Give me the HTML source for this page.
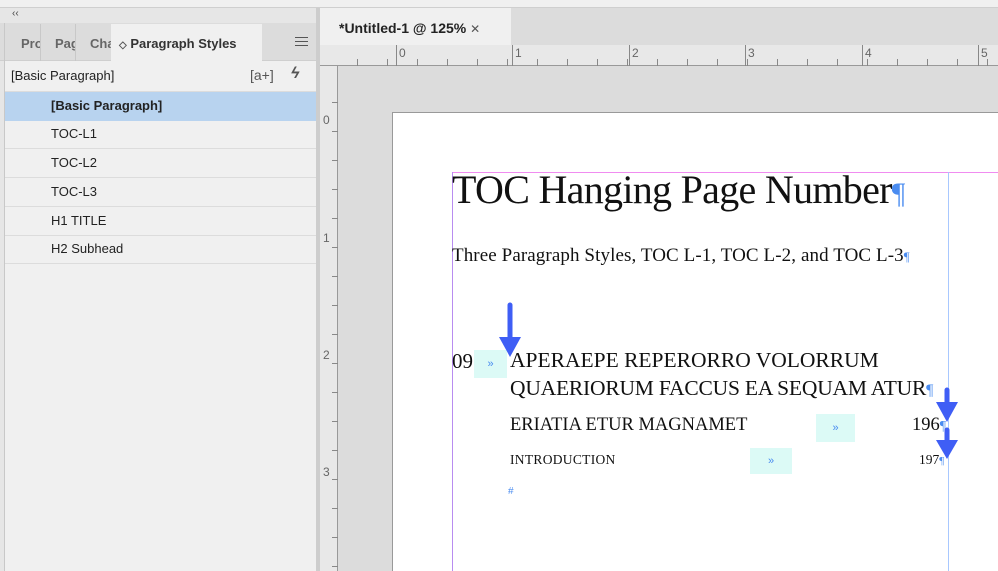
<!DOCTYPE html>
<html><head><meta charset="utf-8"><style>
*{margin:0;padding:0;box-sizing:border-box}
body{width:998px;height:571px;overflow:hidden;background:#f0f0f0;font-family:"Liberation Sans",sans-serif;position:relative}
.a{position:absolute}
.serif{font-family:"Liberation Serif",serif;color:#111;white-space:nowrap}
.row{position:absolute;left:5px;width:311px;height:29px;border-bottom:1px solid #dcdcdc;font-size:13px;color:#222;padding-left:46px;line-height:28px}
.pil{color:#4a8cf0}
.tb{background:#dcfaf6;position:absolute;color:#4a8cf0;font-size:11px;text-align:center}
</style></head><body>
<div class="a" style="left:0;top:0;width:998px;height:8px;background:#f0f0f0"></div>
<div class="a" style="left:0;top:7px;width:998px;height:1px;background:#cfcfcf"></div>
<div class="a" style="left:0;top:8px;width:316px;height:563px;background:#e6e6e6"></div>
<div class="a" style="left:12px;top:8px;font-size:10px;color:#444">‹‹</div>
<div class="a" style="left:0;top:23px;width:316px;height:38px;background:#dcdcdc;border-bottom:1px solid #cfcfcf"></div>
<div class="a" style="left:5px;top:61px;width:311px;height:510px;background:#f0f0f0"></div>
<div class="a" style="left:4px;top:23px;width:1px;height:548px;background:#c8c8c8"></div>
<div class="a" style="left:5px;top:24px;width:36px;height:37px;border-right:1px solid #c8c8c8;font-size:13px;font-weight:bold;color:#666;padding:12px 0 0 16px;overflow:hidden">Pro</div>
<div class="a" style="left:41px;top:24px;width:35px;height:37px;border-right:1px solid #c8c8c8;font-size:13px;font-weight:bold;color:#666;padding:12px 0 0 14px;overflow:hidden">Pag</div>
<div class="a" style="left:76px;top:24px;width:35px;height:37px;font-size:13px;font-weight:bold;color:#666;padding:12px 0 0 14px;overflow:hidden">Cha</div>
<div class="a" style="left:111px;top:24px;width:151px;height:38px;background:#f0f0f0;font-size:13px;font-weight:bold;color:#333;padding:12px 0 0 8px;white-space:nowrap"><span style="font-size:10px;color:#555">◇</span> Paragraph Styles</div>
<div class="a" style="left:295px;top:37px;width:13px;height:9px;border-top:1px solid #555;border-bottom:1px solid #555"></div>
<div class="a" style="left:295px;top:41px;width:13px;height:1px;background:#555"></div>
<div class="a" style="left:11px;top:68px;font-size:13px;color:#222">[Basic Paragraph]</div>
<div class="a" style="left:250px;top:67px;font-size:14px;color:#555">[a+]</div>
<div class="a" style="left:291px;top:65px;font-size:16px;color:#555;font-style:italic;font-weight:bold">ϟ</div>
<div class="a" style="left:5px;top:91px;width:311px;height:1px;background:#dcdcdc"></div>
<div class="row" style="top:92px;background:#b8d3ef;font-weight:bold;border-bottom:none">[Basic Paragraph]</div>
<div class="row" style="top:120px">TOC-L1</div>
<div class="row" style="top:149px">TOC-L2</div>
<div class="row" style="top:178px">TOC-L3</div>
<div class="row" style="top:207px">H1 TITLE</div>
<div class="row" style="top:235px">H2 Subhead</div>
<div class="a" style="left:316px;top:8px;width:4px;height:563px;background:#cdcdcd"></div>
<div class="a" style="left:320px;top:8px;width:678px;height:563px;background:#dcdcdc"></div>
<div class="a" style="left:320px;top:8px;width:191px;height:37px;background:#f0f0f0;font-size:14px;font-weight:bold;color:#222;padding:12px 0 0 19px;white-space:nowrap">*Untitled-1 @ 125% <span style="font-size:12px;font-weight:normal;color:#555">✕</span></div>
<div class="a" style="left:320px;top:45px;width:678px;height:21px;background:#e8e8e8;border-bottom:1px solid #999"></div>
<div class="a" style="left:320px;top:66px;width:18px;height:505px;background:#e8e8e8;border-right:1px solid #999"></div>
<div class="a" style="left:338px;top:59px;width:660px;height:7px;background:repeating-linear-gradient(90deg,transparent 0,transparent 29px,#888 29px,#888 30px);background-position:-10px 0"></div>
<div class="a" style="left:320px;top:74px;width:18px;height:497px;background:repeating-linear-gradient(180deg,transparent 0,transparent 28px,#888 28px,#888 29px);clip-path:inset(0 0 0 12px)"></div>
<div class="a" style="left:396px;top:45px;width:1px;height:21px;background:#888"></div>
<div class="a" style="left:512px;top:45px;width:1px;height:21px;background:#888"></div>
<div class="a" style="left:629px;top:45px;width:1px;height:21px;background:#888"></div>
<div class="a" style="left:745px;top:45px;width:1px;height:21px;background:#888"></div>
<div class="a" style="left:862px;top:45px;width:1px;height:21px;background:#888"></div>
<div class="a" style="left:978px;top:45px;width:1px;height:21px;background:#888"></div>
<div class="a" style="font-size:12px;color:#666;top:46px;left:399px">0</div>
<div class="a" style="font-size:12px;color:#666;top:46px;left:515px">1</div>
<div class="a" style="font-size:12px;color:#666;top:46px;left:632px">2</div>
<div class="a" style="font-size:12px;color:#666;top:46px;left:748px">3</div>
<div class="a" style="font-size:12px;color:#666;top:46px;left:865px">4</div>
<div class="a" style="font-size:12px;color:#666;top:46px;left:981px">5</div>
<div class="a" style="font-size:12px;color:#666;left:323px;top:113px">0</div>
<div class="a" style="font-size:12px;color:#666;left:323px;top:231px">1</div>
<div class="a" style="font-size:12px;color:#666;left:323px;top:348px">2</div>
<div class="a" style="font-size:12px;color:#666;left:323px;top:465px">3</div>
<div class="a" style="left:392px;top:112px;width:606px;height:459px;background:#fff;border-left:1px solid #999;border-top:1px solid #999"></div>
<div class="a" style="left:452px;top:172px;width:546px;height:1px;background:#f08cf0"></div>
<div class="a" style="left:452px;top:172px;width:1px;height:399px;background:#b88cf0"></div>
<div class="a" style="left:948px;top:172px;width:1px;height:399px;background:#a8c8ff"></div>
<div class="a serif" style="left:452px;top:166px;font-size:40px;letter-spacing:-0.7px">TOC Hanging Page Number<span class="pil" style="font-size:30px">¶</span></div>
<div class="a serif" style="left:452px;top:245px;font-size:19px;letter-spacing:0.1px">Three Paragraph Styles, TOC L-1, TOC L-2, and TOC L-3<span class="pil" style="font-size:13px">¶</span></div>
<div class="tb" style="left:474px;top:350px;width:33px;height:28px;line-height:28px">»</div>
<div class="a serif" style="left:452px;top:349px;font-size:21px">09</div>
<div class="a serif" style="left:510px;top:348px;font-size:21.5px;letter-spacing:0">APERAEPE REPERORRO VOLORRUM</div>
<div class="a serif" style="left:510px;top:376px;font-size:21.5px;letter-spacing:-0.2px">QUAERIORUM FACCUS EA SEQUAM ATUR<span class="pil" style="font-size:16px">¶</span></div>
<div class="tb" style="left:816px;top:414px;width:39px;height:28px;line-height:28px">»</div>
<div class="a serif" style="left:510px;top:415px;font-size:18.5px;letter-spacing:0">ERIATIA ETUR MAGNAMET</div>
<div class="a serif" style="left:912px;top:415px;font-size:18.5px">196<span class="pil" style="font-size:14px">¶</span></div>
<div class="tb" style="left:750px;top:448px;width:42px;height:26px;line-height:26px">»</div>
<div class="a serif" style="left:510px;top:452px;font-size:13.5px;letter-spacing:0.3px">INTRODUCTION</div>
<div class="a serif" style="left:919px;top:452px;font-size:13.5px">197<span class="pil" style="font-size:11px">¶</span></div>
<div class="a" style="left:508px;top:486px;font-size:10px;color:#4a8cf0">#</div>
<svg class="a" style="left:0;top:0" width="998" height="571">
<g stroke="#3f5ef5" stroke-width="5" stroke-linecap="round" fill="#3f5ef5">
<line x1="510" y1="305" x2="510" y2="340"/>
<polygon stroke="none" points="499,337 521,337 510,357"/>
<line x1="947" y1="390" x2="947" y2="405"/>
<polygon stroke="none" points="936,402 958,402 947,422"/>
<line x1="947" y1="430" x2="947" y2="442"/>
<polygon stroke="none" points="936,440 958,440 947,459"/>
</g></svg>
</body></html>
